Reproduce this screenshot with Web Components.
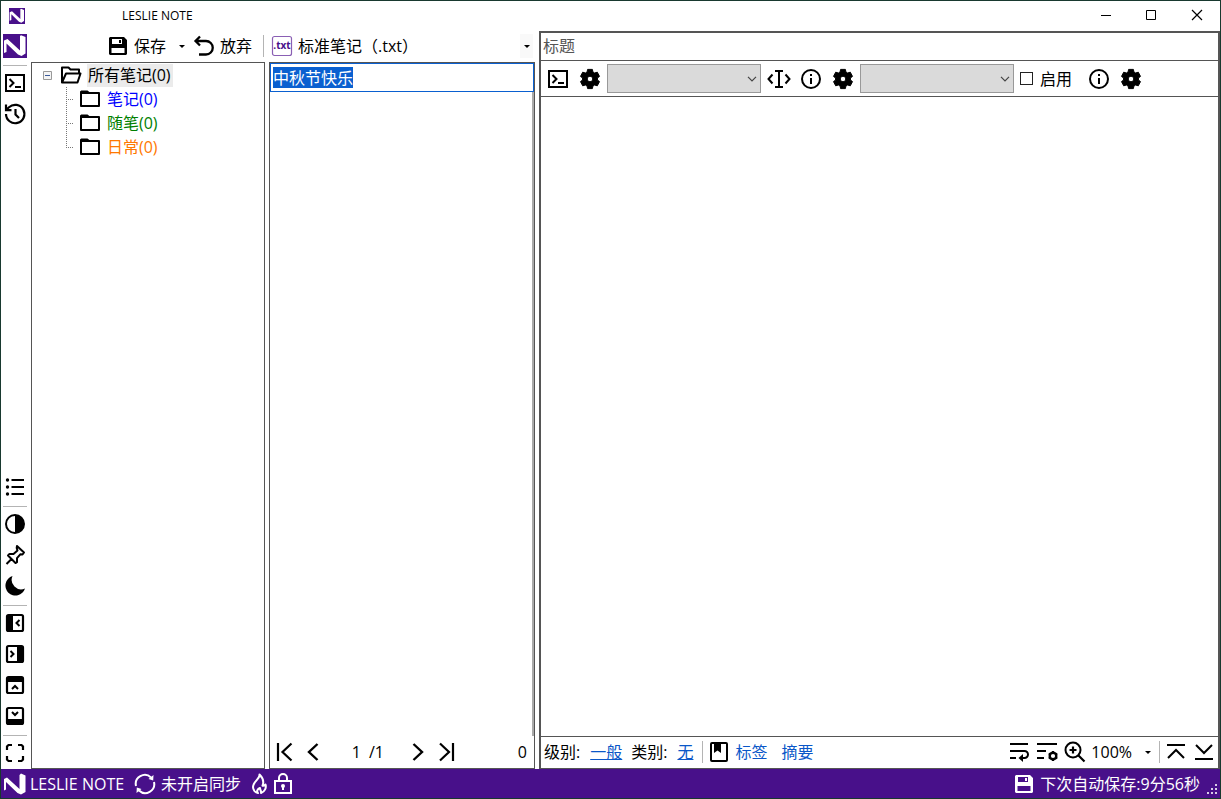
<!DOCTYPE html>
<html lang="zh-CN">
<head>
<meta charset="utf-8">
<title>LESLIE NOTE</title>
<style>
  html, body { height: 100%; margin: 0; }
  body {
    font: 16px/24px "Open Sans", "Noto Sans CJK SC", sans-serif;
    color: #000;
    --brand: #48108a;
    --edge: #18392f;
    --line: #555;
    --soft: #b4b4b4;
    --link: #0a57c8;
    --select: #0a60d0;
  }
</style>
</head>
<body>
<note-app></note-app>
<script>
const ICONS = {
  logo: '<path fill="#48108a" d="M0 0h24v24H0z"/><path fill="#fff" d="M1 6.500 4.500 5 17 16.500V2l1-.8L22.500 3v16.500L18.500 22 15 20.500 3.500 9.500V18L1 19z"/>',
  logoWhite: '<path fill="#fff" d="M2 7 5 5.500 17.500 17V3l1.500-1.500 4.500 2V20L19 22.500 15.500 21 4 10v7.500l-2 1z"/>',
  terminal: '<path fill="none" stroke="currentColor" stroke-width="2" d="M3 4h18v16H3zM6.500 8l4 4-4 4M12 16h6"/>',
  history: '<g fill="none" stroke="currentColor" stroke-width="2.200"><path d="M3 12a9.200 9.200 0 1 0 3-6.800L3 8M3 2.500V8.200h5.500M12.500 7v5.500l3.500 3.500"/></g>',
  list: '<path stroke="currentColor" stroke-width="2.200" d="M8.500 5H21M8.500 12H21M8.500 19H21"/><g fill="currentColor"><circle cx="4.500" cy="5" r="1.700"/><circle cx="4.500" cy="12" r="1.700"/><circle cx="4.500" cy="19" r="1.700"/></g>',
  contrast: '<circle cx="12" cy="12" r="9" fill="none" stroke="currentColor" stroke-width="2"/><path fill="currentColor" d="M12 3a9 9 0 0 1 0 18z"/>',
  pin: '<path fill="none" stroke="currentColor" stroke-width="2" stroke-linejoin="round" d="m14 3 7 6.500-1.500 2-2-.3-3.500 4v4L12.500 20 5 12.500 6.500 11h4l4-3.500-.8-2.500zM9 15.500 3.500 21"/>',
  moon: '<path fill="currentColor" d="M9.500 2A10 10 0 1 0 22 14.500 9.500 9.500 0 0 1 9.500 2z"/>',
  dockLeft: '<rect x="4" y="4" width="16" height="16" rx="1.500" fill="none" stroke="currentColor" stroke-width="2.200"/><path fill="currentColor" d="M4 4h6v16H4z"/><path fill="none" stroke="currentColor" stroke-width="2" d="m16.500 9-3 3 3 3"/>',
  dockRight: '<rect x="4" y="4" width="16" height="16" rx="1.500" fill="none" stroke="currentColor" stroke-width="2.200"/><path fill="currentColor" d="M14 4h6v16h-6z"/><path fill="none" stroke="currentColor" stroke-width="2" d="m7.500 9 3 3-3 3"/>',
  dockTop: '<rect x="4" y="4" width="16" height="16" rx="1.500" fill="none" stroke="currentColor" stroke-width="2.200"/><path fill="currentColor" d="M4 4h16v5H4z"/><path fill="none" stroke="currentColor" stroke-width="2" d="m9 16 3-3 3 3"/>',
  dockBottom: '<rect x="4" y="4" width="16" height="16" rx="1.500" fill="none" stroke="currentColor" stroke-width="2.200"/><path fill="currentColor" d="M4 15h16v5H4z"/><path fill="none" stroke="currentColor" stroke-width="2" d="m9 8 3 3 3-3"/>',
  fullscreen: '<path fill="none" stroke="currentColor" stroke-width="2.200" d="M4 9V5.500L5.500 4H9M15 4h3.500L20 5.500V9M20 15v3.500L18.500 20H15M9 20H5.500L4 18.500V15"/>',
  save: '<path fill="currentColor" fill-rule="evenodd" d="M4 3h14l3 3v14l-1 1H4l-1-1V4zM6 5v5h10V5zM13 6h2v3h-2zM5.500 14v5h13v-5z"/>',
  undo: '<path fill="none" stroke="currentColor" stroke-width="2.300" d="M8 2.500 3.500 7 8 11.500M3.500 7H14a6.700 6.700 0 0 1 0 13.500H7"/>',
  folder: '<path fill="none" stroke="currentColor" stroke-width="2" stroke-linejoin="round" d="M3 6h18v13H3z"/><path fill="currentColor" d="M2 4.500 3.200 3.500H9.500l2.500 2V7H2z"/>',
  folderOpen: '<path fill="none" stroke="currentColor" stroke-width="2" stroke-linejoin="round" d="M3 19.500V4.500h6.500l2 2H20v3.500M3 19.500h15.500L21.500 10.500H7z"/>',
  cog: '<path fill="currentColor" stroke="currentColor" stroke-linejoin="round" fill-rule="evenodd" d="M12 14.800A2.800 2.800 0 1 1 12 9.200 2.800 2.800 0 0 1 12 14.800zM19.400 13a8 8 0 0 0 0-2l2.100-1.600-2.200-4.200-2.700.8-1.700-1L14.400 2.400H9.600L9.100 5l-1.700 1-2.700-.8-2.200 4.200L4.600 11a8 8 0 0 0 0 2l-2.100 1.600 2.200 4.200 2.700-.8 1.700 1 .5 2.600h4.800l.5-2.600 1.700-1 2.700.8 2.200-4.200z"/>',
  caret: '<path fill="none" stroke="currentColor" stroke-width="2" d="m5.500 7.500-4 4.500 4 4.500M18.500 7.500l4 4.500-4 4.500M8 4h8M8 20h8M12 4v16"/>',
  info: '<circle cx="12" cy="12" r="9" fill="none" stroke="currentColor" stroke-width="2"/><path fill="currentColor" d="M11 7h2v2h-2zM11 11h2v6h-2z"/>',
  first: '<path fill="none" stroke="currentColor" stroke-width="2.200" d="M5 3v18M18.500 3.500 9.500 12l9 8.500"/>',
  prev: '<path fill="none" stroke="currentColor" stroke-width="2.400" d="m16.500 4-8.500 8 8.500 8"/>',
  next: '<path fill="none" stroke="currentColor" stroke-width="2.400" d="m7.500 4 8.500 8-8.500 8"/>',
  last: '<path fill="none" stroke="currentColor" stroke-width="2.200" d="M19 3v18M6 3.500l9 8.500-9 8.500"/>',
  bookmark: '<rect x="4" y="3" width="16" height="18" rx="1" fill="none" stroke="currentColor" stroke-width="2"/><path fill="currentColor" d="M7 3h7v10l-3.500-2.500L7 13z"/>',
  wrap: '<path fill="none" stroke="currentColor" stroke-width="2" d="M3 4h18M3 11h14.500a3.500 3.500 0 0 1 0 7H14M3 18h6"/><path fill="currentColor" d="M16 14v8l-4.500-4z"/>',
  wrapCog: '<path fill="none" stroke="currentColor" stroke-width="2" d="M2 4h20M2 11h9M2 18h7"/><circle cx="18" cy="16" r="3.300" fill="none" stroke="currentColor" stroke-width="2.400"/><path stroke="currentColor" stroke-width="2" d="M18 11v2M18 19v2M13.700 13.500l1.700 1M20.600 17.500l1.700 1M13.700 18.500l1.700-1M20.600 14.500l1.700-1"/>',
  zoomIn: '<circle cx="10" cy="10" r="7.500" fill="none" stroke="currentColor" stroke-width="2"/><path stroke="currentColor" stroke-width="2.200" d="m15.500 15.500 6 6M10 6.500v7M6.500 10h7"/>',
  toTop: '<path fill="none" stroke="currentColor" stroke-width="2" d="M3 5h18M4 18l8-8 8 8"/>',
  toBottom: '<path fill="none" stroke="currentColor" stroke-width="2" d="M3 19h18M4 5l8 8 8-8"/>',
  sync: '<path fill="none" stroke="currentColor" stroke-width="2" d="M3 14A9 9 0 0 1 18 5.500M21 10A9 9 0 0 1 6 18.500"/><path fill="currentColor" d="m20.500 3-.3 5.500-4.700-1.500zM3.500 21l.3-5.500L8.500 17z"/>',
  flame: '<path fill="none" stroke="currentColor" stroke-width="2" stroke-linejoin="round" d="M12.500 2.500c1 4-6.500 7-6.500 12.500a6 6 0 0 0 5 6c-2-2.500 0-4 2-5 0 2 1.500 3 1 5 4-1.500 5.500-5.500 4.500-8.500-1 1-2 1.500-3 1.200C17.500 9 15 5 12.500 2.500z"/>',
  lock: '<path fill="none" stroke="currentColor" stroke-width="2" d="M4 9h16v12H4zM8 9V6a4 4 0 0 1 8 0v3"/><circle cx="12" cy="14" r="2" fill="currentColor"/><path fill="currentColor" d="M11 14h2v4h-2z"/>',
  down: '<path fill="currentColor" d="M9 11h6l-3 3z"/>',
  txt: '<rect x="2.500" y="2.500" width="19" height="19" rx="2" fill="#fff" stroke="#8a5fb4" stroke-width="1.200"/><text x="12" y="15" text-anchor="middle" font-family="Open Sans" font-size="10" font-weight="700" fill="#48108a">.txt</text>',
  minimize: '<path stroke="currentColor" d="M8 11.500h10"/>',
  maximize: '<path fill="none" stroke="currentColor" d="M7.500 6.500h9v9h-9z"/>',
  close: '<path stroke="currentColor" stroke-width="1.200" d="m7 6 10 10M17 6 7 16"/>',
  grip: '<g fill="#d8cce6"><path d="M19 12h2v2h-2zM15 16h2v2h-2zM19 16h2v2h-2zM11 20h2v2h-2zM15 20h2v2h-2zM19 20h2v2h-2z"/></g>'
};

function define(name, html, setup) {
  const template = document.createElement('template');
  template.innerHTML = html;
  customElements.define(name, class extends HTMLElement {
    connectedCallback() {
      if (this.shadowRoot) return;
      const content = template.content.cloneNode(true);
      if (setup) setup(this, content);
      this.attachShadow({ mode: 'open' }).append(content);
    }
  });
}

define('note-icon', `
  <style>:host { display: block; flex: none; width: 24px; height: 24px; }
  svg { display: block; width: 100%; height: 100%; }</style>
  <svg viewBox="0 0 24 24" aria-hidden="true"></svg>`,
  (host, root) => { root.querySelector('svg').innerHTML = ICONS[host.getAttribute('name')]; });

define('note-button', `
  <style>
    :host { display: block; flex: none; }
    button { display: flex; align-items: center; gap: 4px; margin: 0; padding: 0; border: 0;
      background: none; color: inherit; font: inherit; white-space: nowrap; }
  </style>
  <button type="button"><note-icon></note-icon><slot></slot></button>`,
  (host, root) => {
    root.querySelector('note-icon').setAttribute('name', host.getAttribute('icon'));
    root.querySelector('button').setAttribute('aria-label', host.getAttribute('label') || host.textContent);
  });

define('note-rule', `<style>
  :host { display: block; flex: none; width: 1px; height: 22px; background: var(--soft); }
  :host([flat]) { width: auto; height: 1px; margin-bottom: -2px; }
</style>`);

define('note-titlebar', `
  <style>
    :host { display: flex; align-items: center; height: 30px; font-size: 12px; line-height: 16px; }
    .mark { width: 16px; height: 16px; margin-left: 8px; }
    .name { flex: 1; margin-left: 97px; }
    nav { display: flex; gap: 22px; padding-right: 11px; }
  </style>
  <note-icon class="mark" name="logo"></note-icon>
  <span class="name">LESLIE NOTE</span>
  <nav><note-button icon="minimize" label="最小化"></note-button>
  <note-button icon="maximize" label="最大化"></note-button>
  <note-button icon="close" label="关闭"></note-button></nav>`);

define('note-sidebar', `
  <style>
    :host { display: flex; flex-direction: column; gap: 7px; padding: 3px 4px 4px 2px; }
    .space { flex: 1; }
  </style>
  <note-button icon="logo" label="主页"></note-button>
  <note-rule flat></note-rule>
  <note-button icon="terminal" label="终端"></note-button>
  <note-button icon="history" label="历史"></note-button>
  <div class="space"></div>
  <note-button icon="list" label="列表"></note-button>
  <note-rule flat></note-rule>
  <note-button icon="contrast" label="对比度"></note-button>
  <note-button icon="pin" label="置顶"></note-button>
  <note-button icon="moon" label="夜间"></note-button>
  <note-rule flat></note-rule>
  <note-button icon="dockLeft" label="左栏"></note-button>
  <note-button icon="dockRight" label="右栏"></note-button>
  <note-button icon="dockTop" label="上栏"></note-button>
  <note-button icon="dockBottom" label="下栏"></note-button>
  <note-rule flat></note-rule>
  <note-button icon="fullscreen" label="全屏"></note-button>`);

define('note-toolbar', `
  <style>
    :host { display: flex; align-items: center; height: 30px; padding: 0 2px 1px 75px; }
    .drop { margin: 0 -2px 0 4px; }
    note-rule { margin: 0 6px 0 11px; }
    .kind { flex: 1; }
    .more { width: 13px; display: flex; justify-content: center; background: #f9f9f9; }
  </style>
  <note-button icon="save">保存</note-button>
  <note-button class="drop" icon="down" label="保存选项"></note-button>
  <note-button icon="undo">放弃</note-button>
  <note-rule></note-rule>
  <note-button class="kind" icon="txt">标准笔记（.txt）</note-button>
  <note-button class="more" icon="down" label="笔记类型"></note-button>`);

define('note-folder', `
  <style>
    :host { display: flex; align-items: center; height: 24px; }
    .box { width: 9px; height: 9px; margin-right: 7px; }
    .twig { flex: none; width: 8px; height: 24px; margin-right: 4px;
      background: linear-gradient(90deg, #777 1px, transparent 1px) 0 12px / 2px 1px repeat-x,
                  linear-gradient(#777 1px, transparent 1px) 0 0 / 1px 2px repeat-y; }
    :host([last]) .twig {
      background: linear-gradient(90deg, #777 1px, transparent 1px) 0 12px / 2px 1px repeat-x,
                  repeating-linear-gradient(#777 0 1px, transparent 1px 2px) 0 0 / 1px 12px no-repeat; }
    :host([root]) .twig, :host(:not([root])) .box { display: none; }
    .label { margin-left: 4px; padding: 0 1px; line-height: 23px; white-space: nowrap; }
    :host([root]) .label { background: #ebebeb; padding: 0 2px 0 1px; }
  </style>
  <svg class="box" viewBox="0 0 9 9"><path fill="#f4f4f4" stroke="#999" d="M.5.5h8v8h-8z"/><path stroke="#3a5a9a" d="M2 4.500h5"/></svg>
  <span class="twig"></span>
  <note-icon></note-icon>
  <span class="label"><slot></slot></span>`,
  (host, root) => root.querySelector('note-icon').setAttribute('name', host.hasAttribute('root') ? 'folderOpen' : 'folder'));

define('note-tree', `
  <style>
    :host { display: block; border: 1px solid var(--line); }
    .root { padding-left: 11px; }
    .kids { padding-left: 34px; }
    .blue span { color: #00f; } .green span { color: #008000; } .orange span { color: #ff7800; }
  </style>
  <note-folder class="root" root>所有笔记(0)</note-folder>
  <div class="kids">
    <note-folder class="blue"><span>笔记(0)</span></note-folder>
    <note-folder class="green"><span>随笔(0)</span></note-folder>
    <note-folder class="orange" last><span>日常(0)</span></note-folder>
  </div>`);

define('note-list', `
  <style>
    :host { display: flex; flex-direction: column; border: 1px solid var(--line); min-width: 0; }
    .edit { display: flex; align-items: center; height: 27px; border: 1px solid var(--select); padding-left: 2px; }
    input { margin: 0; padding: 0; border: 0; font: inherit; outline: 0; }
    .edit input { field-sizing: content; height: 21px; background: var(--select); color: #fff; }
    .rows { flex: 1; border-right: 2px solid #aaa; }
    footer { display: flex; align-items: center; gap: 4px; height: 32px; padding: 0 7px 0 3px; }
    .page { width: 32px; text-align: right; }
    .of { margin: 0 18px 0 4px; }
    .count { margin-left: auto; }
  </style>
  <div class="edit"><input value="中秋节快乐" aria-label="笔记标题"></div>
  <div class="rows"></div>
  <footer>
    <note-button icon="first" label="首页"></note-button>
    <note-button icon="prev" label="上一页"></note-button>
    <input class="page" value="1" aria-label="页码"><span class="of">/1</span>
    <note-button icon="next" label="下一页"></note-button>
    <note-button icon="last" label="末页"></note-button>
    <span class="count">0</span>
  </footer>`);

define('note-select', `
  <style>
    :host { display: block; width: 154px; position: relative; }
    select { display: block; appearance: none; width: 100%; height: 29px; margin: 0; border: 1px solid #999;
      border-radius: 0; background: #dadada; font: inherit; }
    svg { position: absolute; right: 4px; top: 12px; width: 10px; height: 6px; pointer-events: none; }
  </style>
  <select><option></option></select>
  <svg viewBox="0 0 10 6"><path fill="none" stroke="#444" stroke-width="1.200" d="m1 .8 4 4 4-4"/></svg>`,
  (host, root) => root.querySelector('select').setAttribute('aria-label', host.getAttribute('label')));

define('note-editor', `
  <style>
    :host { display: flex; flex-direction: column; min-width: 0; border: solid var(--line); border-width: 2px 2px 1px 2px; }
    .title { height: 26px; margin: 0; padding: 0 2px 1px; border: 0; border-bottom: 1px solid var(--line); font: inherit; outline: 0; }
    .title::placeholder { color: #555; opacity: 1; }
    .tools { display: flex; align-items: center; gap: 8px; height: 35px; padding-left: 5px; border-bottom: 1px solid var(--line); }
    note-select { margin: 0 -2px 0 -3px; }
    label { display: flex; align-items: center; gap: 7px; margin-right: 7px; white-space: nowrap; }
    input[type=checkbox] { appearance: none; width: 13px; height: 13px; margin: 0; border: 1px solid #222; background: #fff; }
    textarea { flex: 1; margin: 0; padding: 2px; border: 0; outline: 0; resize: none; font: inherit; }
    footer { display: flex; align-items: center; height: 30px; padding: 0 2px 1px 3px; border-top: 1px solid var(--line); white-space: nowrap; }
    a { color: var(--link); margin: 0 9px 0 10px; }
    .plain { text-decoration: none; margin: 0 10px 0 4px; }
    note-icon { margin-left: 4px; }
    .end { display: flex; align-items: center; gap: 4px; margin-left: auto; }
    .end note-rule { margin: 0 0 0 -5px; }
    .drop { width: 24px; }
  </style>
  <input class="title" placeholder="标题" aria-label="标题">
  <div class="tools">
    <note-button icon="terminal" label="命令"></note-button>
    <note-button icon="cog" label="命令设置"></note-button>
    <note-select label="命令"></note-select>
    <note-button icon="caret" label="插入"></note-button>
    <note-button icon="info" label="信息"></note-button>
    <note-button icon="cog" label="设置"></note-button>
    <note-select label="模板"></note-select>
    <label><input type="checkbox">启用</label>
    <note-button icon="info" label="说明"></note-button>
    <note-button icon="cog" label="选项"></note-button>
  </div>
  <textarea aria-label="正文"></textarea>
  <footer>
    <span>级别:</span><a href="#level">一般</a><span>类别:</span><a href="#kind">无</a>
    <note-rule></note-rule>
    <note-icon name="bookmark"></note-icon>
    <a class="plain" href="#tags">标签</a><a class="plain" href="#summary">摘要</a>
    <div class="end">
      <note-button icon="wrap" label="自动换行"></note-button>
      <note-button icon="wrapCog" label="换行设置"></note-button>
      <note-button icon="zoomIn">100%</note-button>
      <note-button class="drop" icon="down" label="缩放"></note-button>
      <note-rule></note-rule>
      <note-button icon="toTop" label="顶部"></note-button>
      <note-button icon="toBottom" label="底部"></note-button>
    </div>
  </footer>`);

define('note-status', `
  <style>
    :host { display: flex; align-items: center; gap: 4px; height: 29px; padding-left: 1px; background: var(--brand); color: #fff; white-space: nowrap; }
    .end { display: flex; align-items: center; gap: 4px; margin-left: auto; }
    .name { margin-right: 5px; }
    note-icon[name=flame] { margin: 0 -4px 0 2px; }
    note-icon[name=grip] { margin-left: -8px; }
  </style>
  <note-icon name="logoWhite"></note-icon><span class="name">LESLIE NOTE</span>
  <note-icon name="sync"></note-icon><span>未开启同步</span>
  <note-icon name="flame"></note-icon><note-icon name="lock"></note-icon>
  <div class="end"><note-icon name="save"></note-icon><span>下次自动保存:9分56秒</span><note-icon name="grip"></note-icon></div>`);

define('note-app', `
  <style>
    :host { display: flex; flex-direction: column; box-sizing: border-box; height: 100vh; border: 1px solid var(--edge); background: #fff; }
    main { flex: 1; min-height: 0; display: grid; grid-template-columns: 30px 504px minmax(0, 1fr); }
    .left { display: flex; flex-direction: column; min-height: 0; }
    .panes { flex: 1; min-height: 0; display: grid; grid-template-columns: 234px 1fr; gap: 4px; }
    note-editor { margin-left: 4px; }
  </style>
  <note-titlebar></note-titlebar>
  <main>
    <note-sidebar></note-sidebar>
    <section class="left">
      <note-toolbar></note-toolbar>
      <div class="panes"><note-tree></note-tree><note-list></note-list></div>
    </section>
    <note-editor></note-editor>
  </main>
  <note-status></note-status>`);
</script>
</body>
</html>
